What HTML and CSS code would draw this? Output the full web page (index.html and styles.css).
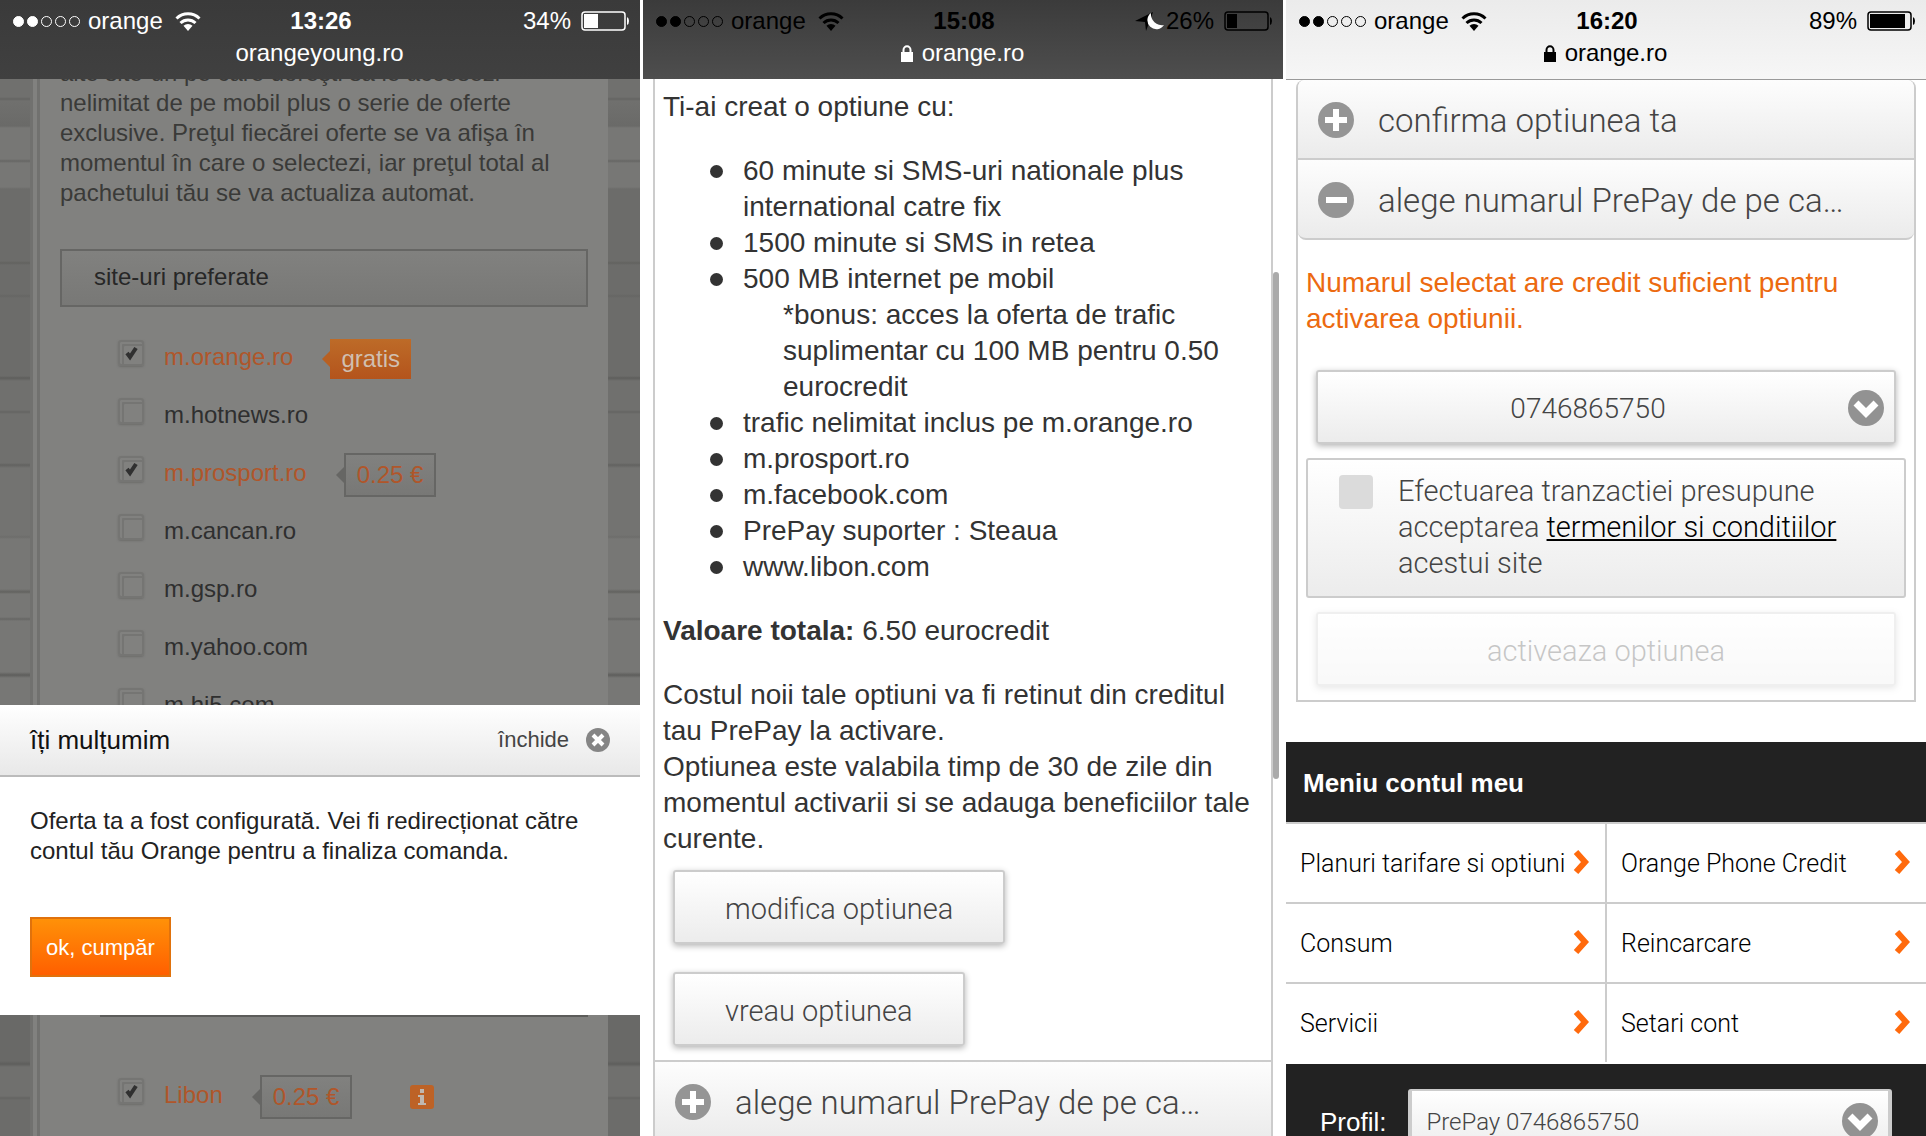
FILE: index.html
```
<!DOCTYPE html>
<html lang="ro">
  <head>
    <meta charset="utf-8">
    <title>Orange PrePay</title>
    <link rel="stylesheet" href="styles.css">
  </head>
  <body>
    <svg class="sprite" aria-hidden="true">
      <symbol id="wifi" viewBox="0 0 26 19">
        <path d="M1.500 6.500a16.500 16.500 0 0 1 23 0" fill="none" stroke="currentColor" stroke-width="3"/>
        <path d="M5.500 11a11 11 0 0 1 15 0" fill="none" stroke="currentColor" stroke-width="3"/>
        <path d="M8.500 13.800a6.500 6.500 0 0 1 9 0L13 19z" fill="currentColor"/>
      </symbol>
      <symbol id="lock" viewBox="0 0 12 17">
        <path d="M0 7h12v10H0z" fill="currentColor"/>
        <path d="M2.500 8V5a3.500 3.800 0 0 1 7 0v3" fill="none" stroke="currentColor" stroke-width="2"/>
      </symbol>
      <symbol id="plus" viewBox="0 0 36 36">
        <circle cx="18" cy="18" r="18" fill="#959595"/>
        <path d="M18 7v22M7 18h22" stroke="#fff" stroke-width="6"/>
      </symbol>
      <symbol id="minus" viewBox="0 0 36 36">
        <circle cx="18" cy="18" r="18" fill="#959595"/>
        <path d="M8 18h21" stroke="#fff" stroke-width="6"/>
      </symbol>
      <symbol id="down" viewBox="0 0 36 36">
        <circle cx="18" cy="18" r="18" fill="#929292"/>
        <path d="M8 13l10 10 10-10" fill="none" stroke="#fff" stroke-width="7"/>
      </symbol>
      <symbol id="chevron" viewBox="0 0 16 24">
        <path d="M3 2l9 10-9 10" fill="none" stroke="#ff6a0d" stroke-width="6"/>
      </symbol>
    </svg>

    <main class="screens">
      <!-- Orange Young: site picker with confirmation dialog -->
      <section class="screen young">
        <header class="status dark">
          <div class="status-row">
            <div class="carrier">
              <span class="signal"><i class="on"></i><i class="on"></i><i></i><i></i><i></i></span>
              <span>orange</span>
              <svg class="wifi"><use href="#wifi"/></svg>
            </div>
            <strong>13:26</strong>
            <div class="power">
              <span>34%</span>
              <svg class="battery" viewBox="0 0 48 20"><rect x="1" y="1" width="43" height="18" rx="3" fill="none" stroke="currentColor" stroke-width="1.500"/><path d="M3 3h14v14H3zM46 6q2 1 2 4t-2 4z" fill="currentColor"/></svg>
            </div>
          </div>
          <div class="address">orangeyoung.ro</div>
        </header>
        <div class="wall">
          <div class="panel">
            <p class="intro">alte site-uri pe care doreşti să le accesezi<br>nelimitat de pe mobil plus o serie de oferte exclusive. Preţul fiecărei oferte se va afişa în momentul în care o selectezi, iar preţul total al pachetului tău se va actualiza automat.</p>
            <h2 class="group-title">site-uri preferate</h2>
            <ul class="sites">
              <li><input type="checkbox" id="orange" checked><label for="orange">m.orange.ro</label><span class="tag free">gratis</span></li>
              <li><input type="checkbox" id="hotnews"><label for="hotnews">m.hotnews.ro</label></li>
              <li><input type="checkbox" id="prosport" checked><label for="prosport">m.prosport.ro</label><span class="tag">0.25 €</span></li>
              <li><input type="checkbox" id="cancan"><label for="cancan">m.cancan.ro</label></li>
              <li><input type="checkbox" id="gsp"><label for="gsp">m.gsp.ro</label></li>
              <li><input type="checkbox" id="yahoo"><label for="yahoo">m.yahoo.com</label></li>
              <li><input type="checkbox" id="hi5"><label for="hi5">m.hi5.com</label></li>
            </ul>
            <ul class="sites extras">
              <li>
                <input type="checkbox" id="libon" checked><label for="libon">Libon</label><span class="tag">0.25 €</span>
                <svg class="info" viewBox="0 0 24 24"><rect width="24" height="24" rx="3" fill="#bd6226"/><path d="M10 4h4v4h-4zM8 10h6v8h2v2H8v-2h2v-6H8z" fill="#c0b8b0"/></svg>
              </li>
            </ul>
          </div>
        </div>
        <div class="dialog" role="dialog" aria-labelledby="dialog-title">
          <div class="dialog-head">
            <h1 id="dialog-title">îți mulțumim</h1>
            <button class="close">închide
              <svg viewBox="0 0 24 24"><circle cx="12" cy="12" r="12" fill="#858585"/><path d="M7 7l10 10M17 7L7 17" stroke="#fff" stroke-width="4"/></svg>
            </button>
          </div>
          <p>Oferta ta a fost configurată. Vei fi redirecționat către contul tău Orange pentru a finaliza comanda.</p>
          <button class="buy">ok, cumpăr</button>
        </div>
      </section>

      <!-- Option summary -->
      <section class="screen">
        <header class="status dim">
          <div class="status-row">
            <div class="carrier">
              <span class="signal"><i class="on"></i><i class="on"></i><i></i><i></i><i></i></span>
              <span>orange</span>
              <svg class="wifi"><use href="#wifi"/></svg>
            </div>
            <strong>15:08</strong>
            <div class="power">
              <svg class="mode" viewBox="0 0 30 22"><path d="M18 2L0 11l10 1 1 9z" fill="#000"/><path d="M16 3a11 11 0 0 0 13 12a9 9 0 1 1-13-12z" fill="#fff"/></svg>
              <span>26%</span>
              <svg class="battery" viewBox="0 0 48 20"><rect x="1" y="1" width="43" height="18" rx="3" fill="none" stroke="currentColor" stroke-width="1.500"/><path d="M3 3h10v14H3zM46 6q2 1 2 4t-2 4z" fill="currentColor"/></svg>
            </div>
          </div>
          <div class="address"><svg class="lock"><use href="#lock"/></svg>orange.ro</div>
        </header>
        <div class="box summary">
          <div class="summary-text">
            <p>Ti-ai creat o optiune cu:</p>
            <ul>
              <li>60 minute si SMS-uri nationale plus international catre fix</li>
              <li>1500 minute si SMS in retea</li>
              <li>500 MB internet pe mobil
                <div class="bonus">*bonus: acces la oferta de trafic suplimentar cu 100 MB pentru 0.50 eurocredit</div>
              </li>
              <li>trafic nelimitat inclus pe m.orange.ro</li>
              <li>m.prosport.ro</li>
              <li>m.facebook.com</li>
              <li>PrePay suporter : Steaua</li>
              <li>www.libon.com</li>
            </ul>
            <p><b>Valoare totala:</b> 6.50 eurocredit</p>
            <p>Costul noii tale optiuni va fi retinut din creditul tau PrePay la activare.<br>Optiunea este valabila timp de 30 de zile din momentul activarii si se adauga beneficiilor tale curente.</p>
          </div>
          <div class="actions">
            <button class="btn">modifica optiunea</button>
            <button class="btn">vreau optiunea</button>
          </div>
          <button class="fold"><svg><use href="#plus"/></svg><span>alege numarul PrePay de pe ca…</span></button>
        </div>
        <div class="scrollbar"></div>
      </section>

      <!-- Number selection and account menu -->
      <section class="screen">
        <header class="status light">
          <div class="status-row">
            <div class="carrier">
              <span class="signal"><i class="on"></i><i class="on"></i><i></i><i></i><i></i></span>
              <span>orange</span>
              <svg class="wifi"><use href="#wifi"/></svg>
            </div>
            <strong>16:20</strong>
            <div class="power">
              <span>89%</span>
              <svg class="battery" viewBox="0 0 48 20"><rect x="1" y="1" width="43" height="18" rx="3" fill="none" stroke="currentColor" stroke-width="1.500"/><path d="M3 3h35v14H3zM46 6q2 1 2 4t-2 4z" fill="currentColor"/></svg>
            </div>
          </div>
          <div class="address"><svg class="lock"><use href="#lock"/></svg>orange.ro</div>
        </header>
        <div class="box choose">
          <button class="fold first"><svg><use href="#plus"/></svg><span>confirma optiunea ta</span></button>
          <button class="fold last"><svg><use href="#minus"/></svg><span>alege numarul PrePay de pe ca…</span></button>
          <p class="notice">Numarul selectat are credit suficient pentru activarea optiunii.</p>
          <div class="picker">
            <select class="btn" aria-label="Numar"><option>0746865750</option></select>
            <svg><use href="#down"/></svg>
          </div>
          <div class="terms">
            <input type="checkbox" id="terms">
            <label for="terms">Efectuarea tranzactiei presupune acceptarea <a href="#">termenilor si conditiilor</a> acestui site</label>
          </div>
          <button class="btn wide" disabled>activeaza optiunea</button>
        </div>
        <h2 class="menu-title">Meniu contul meu</h2>
        <nav class="menu">
          <a href="#">Planuri tarifare si optiuni<svg><use href="#chevron"/></svg></a>
          <a href="#">Orange Phone Credit<svg><use href="#chevron"/></svg></a>
          <a href="#">Consum<svg><use href="#chevron"/></svg></a>
          <a href="#">Reincarcare<svg><use href="#chevron"/></svg></a>
          <a href="#">Servicii<svg><use href="#chevron"/></svg></a>
          <a href="#">Setari cont<svg><use href="#chevron"/></svg></a>
        </nav>
        <div class="profile">
          <label for="profile">Profil:</label>
          <div class="picker">
            <select id="profile"><option>PrePay 0746865750</option></select>
            <svg><use href="#down"/></svg>
          </div>
        </div>
      </section>
    </main>
  </body>
</html>
```

FILE: styles.css
```
* {
  box-sizing: border-box;
}

body {
  margin: 0;
  background: #fff;
  color: #333;
  font-family: "Liberation Sans", Arial, sans-serif;
  font-size: 24px;
  line-height: 30px;
}

h1, h2, p, ul {
  margin: 0;
  padding: 0;
  font-weight: normal;
}

button, select {
  font-family: inherit;
}

.sprite {
  display: none;
}

.screens {
  display: grid;
  grid-template-columns: repeat(3, minmax(0, 1fr));
  gap: 3px;
  height: 100vh;
  overflow: hidden;
}

.screen {
  position: relative;
  display: flex;
  flex-direction: column;
  min-height: 0;
  overflow: hidden;
}

/* phone status bar */
.status {
  flex: none;
  height: 79px;
  padding: 6px 11px 0 13px;
  z-index: 1;
}

.status.dark {
  background: linear-gradient(#3a3a3a, #404040);
  color: #fff;
}

.status.dim {
  background: linear-gradient(#3b3b3b, #4e4e4e);
  color: #000;
}

.status.light {
  height: 80px;
  background: linear-gradient(#ebebeb, #f6f6f6);
  border-bottom: 1px solid #999;
  color: #000;
}

.status-row {
  display: grid;
  grid-template-columns: 1fr auto 1fr;
  align-items: center;
}

.carrier, .power, .signal {
  display: flex;
  align-items: center;
}

.carrier {
  gap: 8px;
}

.signal {
  gap: 3px;
}

.signal i {
  width: 11px;
  height: 11px;
  border: 1px solid currentColor;
  border-radius: 50%;
}

.signal .on {
  background: currentColor;
}

.wifi {
  width: 26px;
  height: 19px;
  margin-left: 4px;
}

.power {
  justify-content: flex-end;
  gap: 10px;
}

.battery {
  width: 48px;
  height: 20px;
}

.mode {
  width: 30px;
  height: 22px;
  margin-right: -9px;
}

.address {
  display: flex;
  justify-content: center;
  align-items: center;
  gap: 9px;
  margin-top: 2px;
  padding-right: 3px;
}

.dim .address {
  color: #fff;
}

.lock {
  width: 12px;
  height: 17px;
}

/* dimmed page behind the dialog */
.wall {
  flex: 1;
  min-height: 0;
  padding: 0 32px 0 30px;
  overflow: hidden;
  background: linear-gradient(#70706e 18px, #646462 20px, #70706e 22px, #6a6a68 47px, #777775 49px 80px, #666664 82px, #777775 84px 108px, #6c6c6a 110px, #6c6c6a 182px, #62625f 184px, #6c6c6a 186px 215px, #666664 217px, #6c6c6a 219px 297px, #5e5e5c 299px, #70706e 302px 331px, #646462 333px, #70706e 335px 384px, #626260 386px, #737371 389px 456px, #6d6d6b 458px, #777775 460px 510px, #62625f 513px, #777775 515px 538px, #666664 540px, #777775 542px 593px, #5e5e5c 596px, #777775 599px 900px, #696967 936px 982px, #5e5e5c 985px, #70706e 988px 1017px, #646462 1019px, #6c6c6a 1021px);
}

.panel {
  display: flow-root;
  height: 100%;
  padding: 0 20px;
  background: #81817f;
  border-left: 10px double #71716f;
}

.intro {
  margin-top: -21px;
  padding-right: 20px;
  color: #3a3a38;
}

.group-title {
  margin: 41px 0 21px;
  padding: 11px 32px 13px;
  border: 2px solid #666664;
  background: linear-gradient(#81817f, #787876);
  color: #272727;
  font-size: 24px;
}

.sites {
  padding-left: 58px;
  list-style: none;
  color: #2f2f2f;
}

.sites li {
  display: flex;
  align-items: center;
  height: 58px;
}

.sites input {
  appearance: none;
  width: 26px;
  height: 26px;
  margin: 0 20px 8px 0;
  padding: 2px;
  border: 2px solid #757573;
  border-radius: 3px;
  box-shadow: inset 2px 2px 0 #81817f, inset 4px 4px 0 #757573, 0 1px 2px #6d6d6b;
}

.sites input:checked {
  background: url("data:image/svg+xml,%3Csvg xmlns='http://www.w3.org/2000/svg' viewBox='0 0 22 22'%3E%3Cpath d='M7 11l3 4 6-9' fill='none' stroke='%23303030' stroke-width='4'/%3E%3C/svg%3E");
}

.sites input:checked + label {
  color: #b0562a;
}

.tag {
  position: relative;
  margin: 4px 0 0 37px;
  padding: 5px 11px;
  border: 2px solid #666664;
  background: linear-gradient(#81817f, #787876);
  color: #b0562a;
}

.tag::before {
  content: "";
  position: absolute;
  top: 12px;
  left: -10px;
  border: 8px solid transparent;
  border-left: 0;
  border-right-color: #666664;
}

.tag.free {
  border: 0;
  background: linear-gradient(#bd6b28, #b4541c);
  color: #d0bfb0;
}

.tag.free::before {
  left: -8px;
  border-right-color: #b86022;
}

.extras {
  margin: 281px 0 0 40px;
  padding: 49px 0 0 18px;
  border-top: 2px solid #5c5c5a;
}

.info {
  width: 24px;
  height: 24px;
  margin: 4px 0 0 58px;
}

.dialog {
  position: absolute;
  top: 705px;
  left: 0;
  right: 0;
  z-index: 2;
  padding-bottom: 38px;
  background: #fff;
  color: #222;
}

.dialog-head {
  display: flex;
  justify-content: space-between;
  align-items: center;
  height: 72px;
  padding: 0 30px;
  border-bottom: 2px solid #bbb;
  background: linear-gradient(#fff, #e8e8e8);
}

.dialog-head h1 {
  color: #111;
  font-size: 26px;
}

.close {
  display: flex;
  align-items: center;
  gap: 17px;
  padding: 0;
  border: 0;
  background: none;
  color: #444;
  font-size: 22px;
}

.close svg {
  width: 24px;
  height: 24px;
}

.dialog p {
  padding: 29px 30px 51px;
}

.buy {
  height: 60px;
  margin-left: 30px;
  padding: 2px 14px 0;
  border: 2px solid #e0720c;
  background: linear-gradient(#ff9108, #ff5f00);
  color: #fff;
  font-size: 22px;
}

/* account pages */
.box {
  margin: 0 10px;
  border: 2px solid #ccc;
  font-size: 28px;
  line-height: 36px;
}

.summary {
  flex: 1;
  border-width: 0 2px;
}

.summary-text {
  padding: 10px 8px 0;
}

.summary-text p + p, .summary-text ul {
  margin: 28px 0;
}

.summary-text ul {
  padding-left: 80px;
  list-style: none;
}

.summary-text li::before {
  content: "";
  float: left;
  width: 13px;
  height: 13px;
  margin: 12px 0 0 -33px;
  border-radius: 50%;
  background: #333;
}

.summary-text p:last-child {
  margin-bottom: 13px;
}

.bonus {
  padding-left: 40px;
}

.actions {
  display: flex;
  flex-direction: column;
  align-items: flex-start;
  gap: 28px;
  padding: 0 18px 14px;
}

.btn {
  height: 74px;
  padding: 3px 50px 0;
  border: 2px solid #ccc;
  border-radius: 3px;
  background: linear-gradient(#fff, #ececec);
  box-shadow: 0 2px 6px rgba(0, 0, 0, 0.3);
  color: #444;
  font-family: Roboto, "Liberation Sans", sans-serif;
  font-size: 29px;
  font-weight: 300;
}

.btn:disabled {
  opacity: 0.3;
}

.fold {
  display: flex;
  align-items: center;
  gap: 24px;
  width: 100%;
  height: 80px;
  padding: 1px 20px 0;
  border: 0;
  border-bottom: 2px solid #ccc;
  background: linear-gradient(#fdfdfd, #ebebeb);
  color: #444;
  font-family: Roboto, "Liberation Sans", sans-serif;
  font-size: 33px;
  font-weight: 300;
}

.fold span {
  padding-top: 2px;
  white-space: nowrap;
}

.fold svg, .picker svg {
  flex: none;
  width: 36px;
  height: 36px;
}

.summary .fold {
  height: 82px;
  border-top: 2px solid #ccc;
}

.fold.first {
  border-radius: 8px 8px 0 0;
}

.fold.last {
  border-radius: 0 0 8px 8px;
}

.scrollbar {
  position: absolute;
  top: 272px;
  right: 4px;
  width: 6px;
  height: 507px;
  border-radius: 3px;
  background: #aaa;
}

.choose {
  border-top: 0;
  border-radius: 8px 8px 0 0;
  padding-bottom: 14px;
}

.notice {
  padding: 25px 8px 33px;
  color: #ec6a10;
}

.picker {
  position: relative;
  flex: 1;
}

.picker select {
  appearance: none;
  width: 100%;
}

.picker svg {
  position: absolute;
  right: 12px;
  top: 20px;
  pointer-events: none;
}

.choose .picker {
  margin: 0 18px 14px;
}

.choose .picker select {
  padding: 3px 36px 0 0;
  font-size: 28px;
  text-align: center;
  text-align-last: center;
}

.terms {
  display: flex;
  align-items: flex-start;
  gap: 25px;
  margin: 0 8px 14px;
  padding: 13px 40px 15px 31px;
  border: 2px solid #ccc;
  border-radius: 3px;
  background: linear-gradient(#fff, #ececec);
  color: #444;
  font-family: Roboto, "Liberation Sans", sans-serif;
  font-size: 29px;
  font-weight: 300;
}

.terms input {
  flex: none;
  appearance: none;
  width: 34px;
  height: 34px;
  margin: 2px 0;
  border-radius: 4px;
  background: #dbdbdb;
}

.terms a {
  color: #000;
}

.btn.wide {
  display: block;
  width: calc(100% - 36px);
  margin: 0 18px;
}

.menu-title {
  margin-top: 40px;
  padding: 26px 17px 24px;
  background: #222;
  color: #fff;
  font-size: 26px;
  font-weight: bold;
}

.menu {
  display: grid;
  grid-template-columns: repeat(2, minmax(0, 1fr));
  gap: 2px;
  padding-top: 2px;
  border-bottom: 2px solid #fff;
  background: #ccc;
  font-family: Roboto, "Liberation Sans", sans-serif;
  font-size: 25px;
  font-weight: 300;
}

.menu a {
  display: flex;
  justify-content: space-between;
  align-items: center;
  height: 78px;
  padding: 2px 16px 0 14px;
  background: #fff;
  color: #000;
  text-decoration: none;
  white-space: nowrap;
}

.menu svg {
  width: 16px;
  height: 24px;
  margin-bottom: 4px;
}

.profile {
  display: flex;
  align-items: center;
  flex: none;
  gap: 22px;
  padding: 25px 34px;
  background: #222;
  color: #fff;
  font-size: 26px;
}

.profile select {
  height: 66px;
  padding: 2px 14px 0;
  border: 4px solid #ccc;
  border-top-width: 2px;
  border-radius: 3px;
  background: linear-gradient(#fff, #ececec);
  color: #444;
  font-family: Roboto, "Liberation Sans", sans-serif;
  font-size: 24px;
  font-weight: 300;
}

.profile .picker svg {
  top: 14px;
  right: 14px;
}
```
